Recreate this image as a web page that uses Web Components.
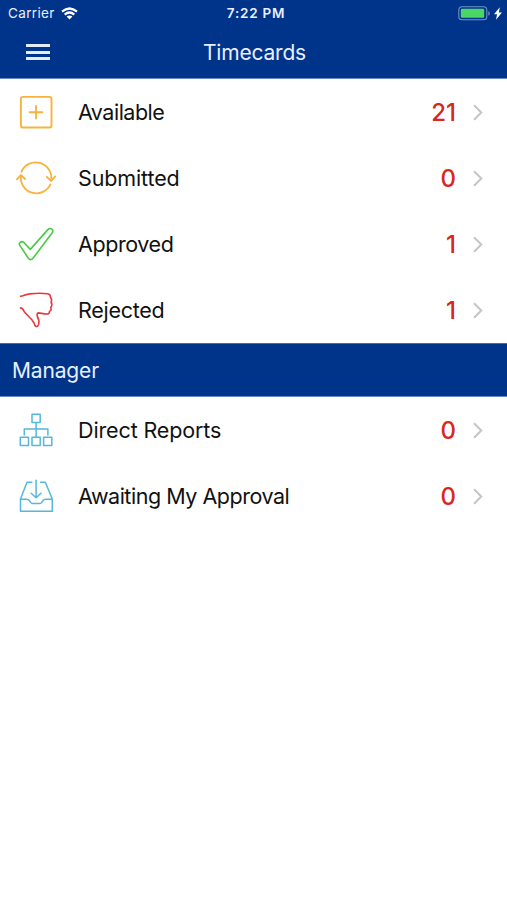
<!DOCTYPE html>
<html lang="en">
<head>
<meta charset="utf-8">
<title>Timecards</title>
<style>
html,body{margin:0;height:100%;background:#fff}
body{font-family:Inter,"Liberation Sans",sans-serif;color:#111}
</style>
</head>
<body>
<timecards-screen></timecards-screen>
<script>
const ICONS = {
  add: ['#f6b33f', '<rect x="8.9" y="8.9" width="30.6" height="30.6" rx="2"/><path d="M24 17.9v12.6M17.7 24.2h12.6"/>', 1.9],
  sync: ['#f6b33f', '<path d="M9.4 17.8A15.6 15.6 0 0 1 39.2 26M38.5 30.4A15.6 15.6 0 0 1 8.9 22M4.9 25.4L8.8 21L13.2 25M34.8 22.8L39.2 27L43.2 22.4"/>', 1.8],
  check: ['#48cb46', '<path d="M8 25.6Q6.6 23.8 8.2 22.4Q10.2 20.8 11.9 22.5L18.3 29.4L35.9 9.6Q37.9 7.6 39.9 9.2Q41.6 10.8 40.2 12.8L21 38.3Q18.6 41 16.3 38.2Z"/>', 1.6],
  reject: ['#e8393d', '<path d="M8.5 10.2C11.5 10 13.5 8.2 18 7.9C24 7.2 31 7.2 35.6 7.8Q38.8 8.4 38.4 11.2Q40.4 13.4 39.1 16Q40.8 18.8 38.8 21.4Q39.8 24.6 37.5 25.2Q37.7 28 34.6 28C31 28 29 26.9 26.4 26.9Q24.6 27.2 25.2 30C26.8 33 27.4 35.5 26.7 38.2Q25.8 40.8 24 40.4Q22.6 39.8 22.2 37.4C20.8 34.6 19 32.2 17 30.8L12.4 26C11.4 23.8 10.8 21.9 8.5 21.9"/>', 1.6],
  org: ['#55b7dc', '<path d="M20 8.3h8.2v8.2H20zM8.3 31.2h8.2v8.3H8.3zM20 31.2h8.2v8.3H20zM31.6 31.2h8.2v8.3h-8.2zM24.1 16.5v14.7M12.3 29v-6h23.6v6"/>', 1.5],
  inbox: ['#55b7dc', '<path d="M19.8 10.3H15L8.5 27v12.2h31.8V27L33.3 10.3h-4.8M8.5 27.2h6.3Q16.5 27.2 17.3 28.5L18.9 30.6Q19.7 31.6 21 31.6h6.4Q28.7 31.6 29.5 30.6L31 28.5Q32 27.2 33.6 27.2h6.7M24.1 8.2v17.3M19.2 21.2L24.1 25.8L29 21.2"/>', 1.5]
};

class TcIcon extends HTMLElement {
  connectedCallback() {
    const [color, shape, width] = ICONS[this.getAttribute('name')];
    this.attachShadow({mode: 'open'}).innerHTML = `
      <style>:host{display:block;width:48px;height:48px}svg{display:block}</style>
      <svg width="48" height="48" viewBox="0 0 48 48" fill="none" stroke="${color}" stroke-width="${width}" stroke-linecap="round" stroke-linejoin="round">${shape}</svg>`;
  }
}
customElements.define('tc-icon', TcIcon);

class StatusBar extends HTMLElement {
  connectedCallback() {
    this.attachShadow({mode: 'open'}).innerHTML = `
      <style>
        :host{display:grid;grid-template-columns:1fr auto 1fr;align-items:center;height:27px;padding:0 5px 0 8px;color:#e9effc;font-size:13.5px;line-height:27px;box-sizing:border-box}
        .left,.right{display:flex;align-items:center}
        .left{gap:6.5px;letter-spacing:.35px}
        .time{font-weight:600;letter-spacing:.75px;padding-left:2px}
        .right{justify-content:flex-end;gap:4px}
        svg{display:block}
      </style>
      <div class="left"><span>Carrier</span>
        <svg width="17" height="13" viewBox="0 0 17 13" fill="none" stroke="#fff" stroke-width="2.2"><path d="M1 4.7Q8.5-1.7 16 4.7M3.7 7.6Q8.5 3.4 13.3 7.6"/><path d="M5.6 9.6Q8.5 7.2 11.4 9.6L8.5 12.6Z" fill="#fff" stroke="none"/></svg>
      </div>
      <div class="time">7:22 PM</div>
      <div class="right">
        <svg width="32" height="15" viewBox="0 0 32 15"><rect x=".8" y=".8" width="28" height="13" rx="3.3" fill="none" stroke="#718fc5" stroke-width="1.1"/><rect x="2.8" y="2.8" width="23.4" height="9" rx="1.4" fill="#4bd763"/><path d="M30.3 5v4.8Q31.8 9 31.8 7.4Q31.8 5.8 30.3 5Z" fill="#718fc5"/></svg>
        <svg width="8" height="13" viewBox="0 0 8 13" fill="#fff"><path d="M5.8.2L0 7.2H3.1L2 12.8L8 5.4H4.9Z"/></svg>
      </div>`;
  }
}
customElements.define('status-bar', StatusBar);

class NavBar extends HTMLElement {
  connectedCallback() {
    this.attachShadow({mode: 'open'}).innerHTML = `
      <style>
        :host{display:grid;grid-template-columns:1fr auto 1fr;align-items:center;height:50px;padding:0 26px;color:#e9effc;font-size:21px;letter-spacing:-.2px}
        .menu{display:flex;flex-direction:column;gap:3.4px;width:24px}
        .menu i{height:3px;background:#e4ebf9}
        .title{padding-left:2px}
      </style>
      <div class="menu"><i></i><i></i><i></i></div><div class="title"><slot></slot></div>`;
  }
}
customElements.define('nav-bar', NavBar);

class SectionHeader extends HTMLElement {
  connectedCallback() {
    this.attachShadow({mode: 'open'}).innerHTML = `
      <style>:host{display:flex;align-items:center;height:54px;padding-left:12px;box-sizing:border-box;background:#00348b;color:#e9effc;font-size:21px;letter-spacing:-.15px;border-top:1px solid #426cb1;border-bottom:1px solid #6688c3}</style>
      <slot></slot>`;
  }
}
customElements.define('section-header', SectionHeader);

class TimecardRow extends HTMLElement {
  connectedCallback() {
    this.attachShadow({mode: 'open'}).innerHTML = `
      <style>
        :host{display:flex;align-items:center;height:66px;padding:0 24px 0 12px;box-sizing:border-box;font-size:21.5px}
        .label{flex:1;margin-left:18px;white-space:nowrap;letter-spacing:var(--track,-.2px)}
        .count{color:#d9271e;font-size:24px;font-weight:500;margin-right:17px}
        svg{display:block}
      </style>
      <tc-icon name="${this.getAttribute('icon')}"></tc-icon>
      <div class="label"><slot></slot></div>
      <div class="count">${this.getAttribute('count')}</div>
      <svg width="10" height="17" viewBox="0 0 10 17" fill="none" stroke="#c5c5c8" stroke-width="2"><path d="M1 1.2L8.3 8.5L1 15.8"/></svg>`;
  }
}
customElements.define('timecard-row', TimecardRow);

class TimecardsScreen extends HTMLElement {
  connectedCallback() {
    this.attachShadow({mode: 'open'}).innerHTML = `
      <style>
        :host{display:block;min-height:100%;background:#fff}
        header{height:79px;background:#00348b;border-bottom:1px solid #6688c3;box-sizing:border-box}
        [icon=add]{--track:-.5px}
        [icon=sync]{--track:-.12px}
        [icon=check]{--track:-.42px}
        [icon=reject]{--track:-.27px}
        [icon=org]{--track:-.13px}
        [icon=inbox]{--track:-.47px}
      </style>
      <header><status-bar></status-bar><nav-bar>Timecards</nav-bar></header>
      <main>
        <timecard-row icon="add" count="21">Available</timecard-row>
        <timecard-row icon="sync" count="0">Submitted</timecard-row>
        <timecard-row icon="check" count="1">Approved</timecard-row>
        <timecard-row icon="reject" count="1">Rejected</timecard-row>
        <section-header>Manager</section-header>
        <timecard-row icon="org" count="0">Direct Reports</timecard-row>
        <timecard-row icon="inbox" count="0">Awaiting My Approval</timecard-row>
      </main>`;
  }
}
customElements.define('timecards-screen', TimecardsScreen);
</script>
</body>
</html>
